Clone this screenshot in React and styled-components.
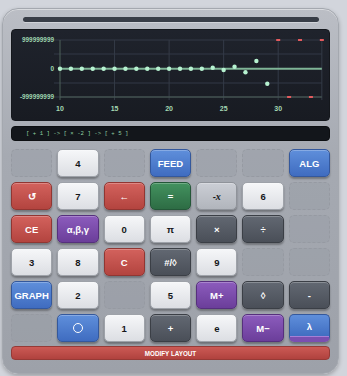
import React from "react";
import styled, { createGlobalStyle, css } from "styled-components";

const GlobalStyle = createGlobalStyle`
  html, body {
    margin: 0;
    padding: 0;
    background: #d2d5dc;
    font-family: "Liberation Sans", Arial, sans-serif;
  }
`;

const keys = [
  [null, ["4", "white"], null, ["FEED", "blue"], null, null, ["ALG", "blue"]],
  [["↺", "red"], ["7", "white"], ["←", "red"], ["=", "green"], ["negx", "light"], ["6", "white"], null],
  [["CE", "red"], ["α,β,γ", "purple"], ["0", "white"], ["π", "white"], ["×", "dark"], ["÷", "dark"], null],
  [["3", "white"], ["8", "white"], ["C", "red"], ["#/◊", "dark"], ["9", "white"], null, null],
  [["GRAPH", "blue"], ["2", "white"], null, ["5", "white"], ["M+", "purple"], ["◊", "dark"], ["-", "dark"]],
  [null, ["circle", "blue"], ["1", "white"], ["+", "dark"], ["e", "white"], ["M−", "purple"], ["λ", "lambda"]],
];

const tones = {
  white: css`
    background: linear-gradient(#f6f7f9, #dcdee3);
    color: #15171a;
    border-color: #9ea2a9;
  `,
  blue: css`
    background: linear-gradient(#5f8fdb, #3f6cc0);
    color: #fff;
    border-color: #34589c;
  `,
  lambda: css`
    background: linear-gradient(#5f8fdb, #3f6cc0);
    color: #fff;
    border-color: #34589c;
    border-bottom: 5px solid #7a4fb0;
    box-shadow: inset 0 -1px 0 #a57fd6, 0 2px 2px rgba(0, 0, 0, 0.3);
  `,
  red: css`
    background: linear-gradient(#d3625d, #b3443f);
    color: #fff;
    border-color: #913632;
  `,
  green: css`
    background: linear-gradient(#43925f, #2d6c44);
    color: #fff;
    border-color: #245738;
  `,
  purple: css`
    background: linear-gradient(#8c5cbd, #6b3e9a);
    color: #fff;
    border-color: #56307d;
  `,
  dark: css`
    background: linear-gradient(#626872, #4a4f58);
    color: #fff;
    border-color: #3b3f46;
  `,
  light: css`
    background: linear-gradient(#cbced5, #b1b5bc);
    color: #15171a;
    border-color: #8f939a;
  `,
};

const Page = styled.div`
  padding: 8px 8px 3px 2px;
`;

const Body = styled.div`
  box-sizing: border-box;
  width: 337px;
  padding: 8px 8px 13px 8px;
  border-radius: 16px;
  border: 1px solid #a4a8af;
  background: linear-gradient(#bbbec5, #a6aab2 40%, #9da1a9);
  box-shadow: 0 2px 4px rgba(0, 0, 0, 0.25), inset 0 1px 0 rgba(255, 255, 255, 0.45);
  display: flex;
  flex-direction: column;
`;

const TopBar = styled.div`
  height: 5px;
  margin: 0 11px 7px 12px;
  border-radius: 3px;
  background: #383d46;
  box-shadow: 0 1px 0 rgba(255, 255, 255, 0.35);
`;

const Screen = styled.div`
  height: 92px;
  border-radius: 4px;
  background: linear-gradient(#1f232c, #181b22);
  border: 1px solid #14171c;
  box-sizing: border-box;
  overflow: hidden;
`;

const Sequence = styled.div`
  margin-top: 5px;
  height: 15px;
  box-sizing: border-box;
  border-radius: 4px;
  background: #13161b;
  border: 1px solid #0d0f12;
  color: #8fd0a2;
  font-family: "Liberation Mono", "DejaVu Sans Mono", monospace;
  font-size: 5.7px;
  display: flex;
  align-items: center;
  padding-left: 14px;
  white-space: pre;
`;

const Keypad = styled.div`
  margin-top: 8px;
  display: grid;
  grid-template-columns: repeat(7, 1fr);
  grid-auto-rows: 28px;
  gap: 5px;
`;

const Key = styled.div`
  box-sizing: border-box;
  border-radius: 5px;
  border: 1px solid;
  display: flex;
  align-items: center;
  justify-content: center;
  font-weight: bold;
  font-size: 9.5px;
  box-shadow: 0 2px 2px rgba(0, 0, 0, 0.3), inset 0 1px 0 rgba(255, 255, 255, 0.25);
  ${(p) => tones[p.$tone]}
`;

const Slot = styled.div`
  box-sizing: border-box;
  border-radius: 5px;
  border: 1px dashed #969aa2;
  background: rgba(150, 154, 162, 0.35);
`;

const Ring = styled.span`
  width: 8px;
  height: 8px;
  border: 1.5px solid #fff;
  border-radius: 50%;
`;

const Italic = styled.i`
  font-family: "Liberation Serif", serif;
  font-size: 10px;
`;

const ModifyBar = styled.div`
  margin-top: 4px;
  height: 14px;
  box-sizing: border-box;
  border-radius: 4px;
  border: 1px solid #963a36;
  background: linear-gradient(#cc5a55, #b0423e);
  color: #fff;
  font-weight: bold;
  font-size: 6.3px;
  display: flex;
  align-items: center;
  justify-content: center;
`;

const X0 = 49;
const UNIT = 10.91;
const ZERO = 39.7;
const TOP = 11;
const BOTTOM = 68;
const px = (n) => X0 + (n - 10) * UNIT;

const points = [
  ...Array.from({ length: 14 }, (_, i) => [10 + i, ZERO]),
  [24, 38.7],
  [25, 41],
  [26, 37.7],
  [27, 43.3],
  [28, 32],
  [29, 54.7],
];
const clipped = [
  [30, "top"],
  [31, "bottom"],
  [32, "top"],
  [33, "bottom"],
  [34, "top"],
];

const Graph = () => (
  <svg width="319" height="90" viewBox="1 1 319 90">
    {[TOP, 25, 54, BOTTOM].map((y) => (
      <line key={y} x1={px(10) - 6} x2={px(34)} y1={y} y2={y} stroke="#323946" strokeWidth="1" />
    ))}
    {[15, 20, 25, 30, 34].map((n) => (
      <line key={n} x1={px(n)} x2={px(n)} y1={TOP} y2={BOTTOM + 3} stroke="#343b47" strokeWidth="1" />
    ))}
    <line x1={px(10)} x2={px(10)} y1={TOP} y2={BOTTOM + 3} stroke="#4d6158" strokeWidth="1" />
    <line x1={px(10)} x2={px(34)} y1={BOTTOM} y2={BOTTOM} stroke="#4d6158" strokeWidth="1" />
    <line x1={px(10)} x2={px(34)} y1={ZERO} y2={ZERO} stroke="#7fb596" strokeWidth="2" />
    <g fill="#9fd6b0" fontFamily="Liberation Sans, sans-serif" fontWeight="bold" fontSize="6.4" textAnchor="end">
      <text x="43" y={TOP + 2.3}>999999999</text>
      <text x="43" y={ZERO + 2.3}>0</text>
      <text x="43" y={BOTTOM + 2.3}>-999999999</text>
    </g>
    <g fill="#a5d9b4" fontFamily="Liberation Sans, sans-serif" fontWeight="bold" fontSize="7" textAnchor="middle">
      {[10, 15, 20, 25, 30].map((n) => (
        <text key={n} x={px(n)} y="81.5">
          {n}
        </text>
      ))}
    </g>
    {points.map(([n, y]) => (
      <circle key={n} cx={px(n)} cy={y} r="2.2" fill="#b6f2d0" />
    ))}
    {clipped.map(([n, side]) => (
      <rect
        key={n}
        x={px(n) - 2}
        y={side === "top" ? TOP - 1 : BOTTOM - 1}
        width="4"
        height="2"
        fill="#e35b5e"
      />
    ))}
  </svg>
);

const label = (text) => {
  if (text === "circle") return <Ring />;
  if (text === "negx")
    return (
      <>
        -<Italic>x</Italic>
      </>
    );
  return text;
};

export default function App() {
  return (
    <Page>
      <GlobalStyle />
      <Body>
        <TopBar />
        <Screen>
          <Graph />
        </Screen>
        <Sequence>{"[ + 1 ] -> [ × -2 ] -> [ + 5 ]"}</Sequence>
        <Keypad>
          {keys.flat().map((k, i) =>
            k ? (
              <Key key={i} $tone={k[1]}>
                {label(k[0])}
              </Key>
            ) : (
              <Slot key={i} />
            )
          )}
        </Keypad>
        <ModifyBar>MODIFY LAYOUT</ModifyBar>
      </Body>
    </Page>
  );
}
